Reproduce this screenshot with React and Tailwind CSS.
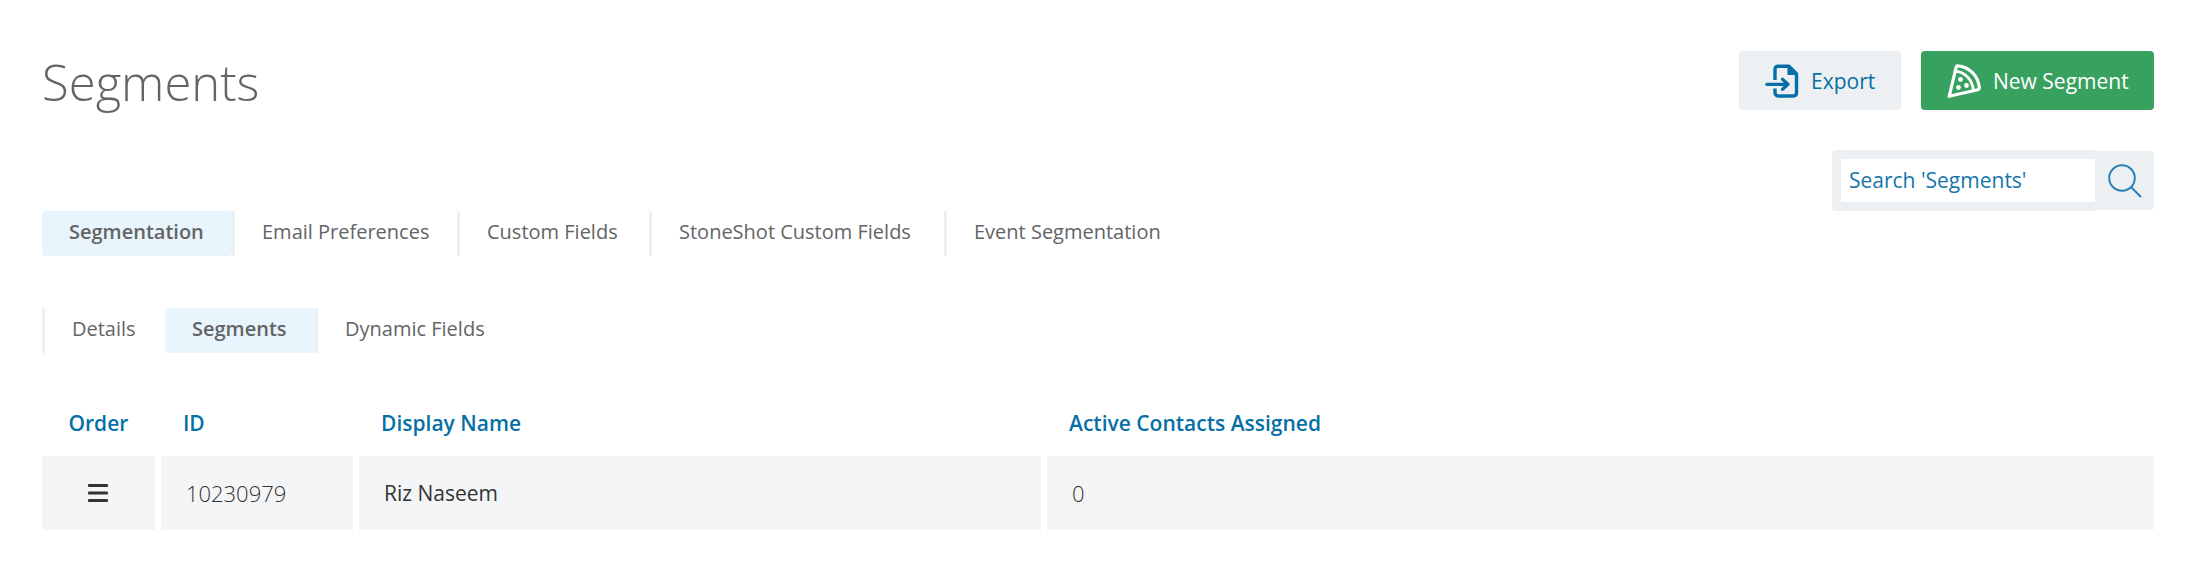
const sectionTabs = [
  { label: "Segmentation", active: true, divider: true, width: "min-w-[193px]" },
  { label: "Email Preferences", divider: true, width: "min-w-[225px]" },
  { label: "Custom Fields", divider: true, width: "min-w-[192px]" },
  { label: "StoneShot Custom Fields", divider: true, width: "min-w-[295px]" },
  { label: "Event Segmentation", width: "min-w-[220px]" },
];

const subTabs = [
  { label: "Details", width: "min-w-[120px]" },
  { label: "Segments", active: true, divider: true, width: "min-w-[153px]" },
  { label: "Dynamic Fields", width: "min-w-[190px]" },
];

const rows = [{ id: "10230979", name: "Riz Naseem", contacts: "0" }];

function ExportIcon() {
  return (
    <svg viewBox="0 0 34 34" className="size-[34px] shrink-0" fill="none" aria-hidden="true">
      <path
        d="M10 16V5.200C10 3.200 11.200 2.200 13.200 2.200H23.500l8 8v18.600c0 2-1.200 3.200-3.200 3.200H13.200c-2 0-3.200-1.200-3.200-3.200V24.500"
        stroke="currentColor"
        strokeWidth="3.400"
      />
      <path d="M22.500 1h2.500l8 8v2H22.500z" fill="currentColor" />
      <path d="M1.800 20.300h21M17.500 15.300l5.500 5-5.500 5" stroke="currentColor" strokeWidth="3.200" strokeLinecap="round" strokeLinejoin="round" />
    </svg>
  );
}

function PizzaIcon() {
  return (
    <svg viewBox="0 0 34 34" className="size-[34px] shrink-0" fill="none" aria-hidden="true">
      <path
        d="M10.500 1.800C22 2.500 31 11.500 32.300 23.500c.1 1.200-.4 1.900-1.500 2.200L2.200 32.300 9.200 3c.2-.8.6-1.200 1.300-1.200z"
        stroke="currentColor"
        strokeWidth="3.200"
        strokeLinejoin="round"
      />
      <path d="M9 7.300c9 .8 16 8.200 17.300 18.200" stroke="currentColor" strokeWidth="2.800" />
      <circle cx="13.500" cy="15.500" r="2.400" fill="currentColor" />
      <circle cx="11.500" cy="23.500" r="2.400" fill="currentColor" />
      <circle cx="19.500" cy="21.500" r="2.400" fill="currentColor" />
    </svg>
  );
}

function SearchIcon() {
  return (
    <svg viewBox="0 0 34 34" className="size-[34px] shrink-0" fill="none" stroke="currentColor" strokeWidth="2" aria-hidden="true">
      <circle cx="14" cy="14" r="12.800" />
      <path d="M23.200 23.200 33 33" />
    </svg>
  );
}

function MenuIcon() {
  return (
    <svg viewBox="0 0 20 18" className="h-[18px] w-5" fill="#333333" aria-hidden="true">
      <rect y="0" width="20" height="3" rx="1" />
      <rect y="7.500" width="20" height="3" rx="1" />
      <rect y="15" width="20" height="3" rx="1" />
    </svg>
  );
}

function Tab({ tab }) {
  return (
    <li className={`flex ${tab.width} ${tab.divider ? "border-r-3 border-[#ecf0f3]" : ""}`}>
      <a
        href="#"
        aria-current={tab.active ? "page" : undefined}
        className={`flex h-[45px] grow items-center whitespace-nowrap px-[27px] pb-1 text-[20px] ${
          tab.active ? "rounded bg-[#e8f5fc] font-semibold" : ""
        }`}
      >
        {tab.label}
      </a>
    </li>
  );
}

export default function App() {
  return (
    <main className="bg-white px-[42px] pb-10 pt-[51px] font-['Open_Sans',sans-serif] text-[21px] leading-7 text-[#636466]">
      <header className="flex items-start justify-between">
        <h1 className="text-[49px] font-light leading-[62px]">Segments</h1>
        <div className="flex gap-5">
          <button type="button" className="flex h-[59px] min-w-[162px] items-center gap-3 whitespace-nowrap rounded bg-[#ecf0f3] pl-[26px] pr-6 text-[#066fa5]">
            <ExportIcon />
            Export
          </button>
          <button type="button" className="flex h-[59px] min-w-[233px] items-center gap-3 whitespace-nowrap rounded bg-[#39a15f] pl-[26px] pr-6 text-white">
            <PizzaIcon />
            New Segment
          </button>
        </div>
      </header>

      <form role="search" className="mt-[37px] flex items-center justify-end" onSubmit={(e) => e.preventDefault()}>
        <div className="flex rounded-l bg-[#ecf0f3] py-[9px] pl-[9px]">
          <input
            type="text"
            aria-label="Search segments"
            placeholder="Search 'Segments'"
            className="h-[43px] w-[254px] bg-white px-2 pb-px text-[#066fa5] outline-none placeholder:text-[#1675a9]"
          />
        </div>
        <button type="submit" aria-label="Search" className="flex size-[59px] items-center justify-center rounded-r bg-[#ecf0f3] text-[#2a80b4]">
          <SearchIcon />
        </button>
      </form>

      <nav aria-label="Sections">
        <ul className="flex">
          {sectionTabs.map((tab) => (
            <Tab key={tab.label} tab={tab} />
          ))}
        </ul>
      </nav>

      <nav aria-label="Segmentation" className="mt-[52px]">
        <ul className="flex border-l-3 border-[#ecf0f3]">
          {subTabs.map((tab) => (
            <Tab key={tab.label} tab={tab} />
          ))}
        </ul>
      </nav>

      <table className="mt-[37px] w-full table-fixed border-separate border-spacing-0 text-left">
        <colgroup>
          <col className="w-[5.63%]" />
          <col className="w-[9.38%]" />
          <col className="w-[32.58%]" />
          <col />
        </colgroup>
        <thead>
          <tr className="h-[66px] text-[#066fa5]">
            <th className="border-r-6 border-white text-center font-semibold">Order</th>
            <th className="px-[22px] font-semibold">ID</th>
            <th className="px-[22px] font-semibold">Display Name</th>
            <th className="px-[22px] font-semibold">Active Contacts Assigned</th>
          </tr>
        </thead>
        <tbody>
          {rows.map((row) => (
            <tr key={row.id} className="h-[74px] text-[#333333]">
              <td className="border-r-6 border-white bg-[#f4f5f7]">
                <button type="button" aria-label="Reorder" className="mx-auto flex">
                  <MenuIcon />
                </button>
              </td>
              <td className="border-r-6 border-white bg-[#f4f5f7] px-[25px] text-[22px] font-light">{row.id}</td>
              <td className="border-r-6 border-white bg-[#f4f5f7] px-[25px]">{row.name}</td>
              <td className="bg-[#f4f5f7] px-[25px] text-[22px] font-light">{row.contacts}</td>
            </tr>
          ))}
        </tbody>
      </table>
    </main>
  );
}
